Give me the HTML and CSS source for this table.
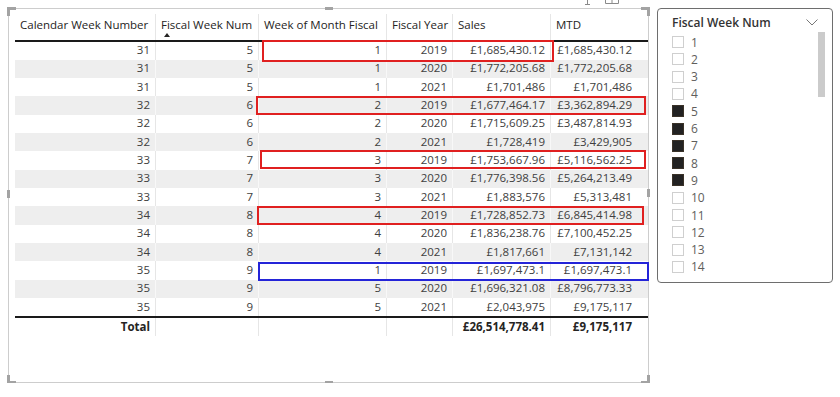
FILE: index.html
```html
<!DOCTYPE html>
<html lang="en">
  <head>
    <meta charset="UTF-8" />
    <meta name="viewport" content="width=device-width, initial-scale=1.0" />
    <title>Fiscal Week Report</title>
    <link rel="stylesheet" href="styles.css">
  </head>
  <body>
    <div class="page">
      <div class="visual">
        <svg class="visual-icons" width="40" height="8" viewBox="0 0 40 8">
          <path d="M3.5 0 V4 M1 4.5 H6" stroke="#8a8a8a" fill="none" />
          <path d="M21.5 0 V3.5 H34.5 V0 M28 0 V3.5" stroke="#8a8a8a" fill="none" />
        </svg>

        <div class="table">
          <div class="row head">
            <div class="cell">Calendar Week Number</div>
            <div class="cell sorted">Fiscal Week Num</div>
            <div class="cell">Week of Month Fiscal</div>
            <div class="cell">Fiscal Year</div>
            <div class="cell">Sales</div>
            <div class="cell">MTD</div>
          </div>
          <div class="rows">
            <div class="row"><div class="cell">31</div><div class="cell">5</div><div class="cell">1</div><div class="cell">2019</div><div class="cell">£1,685,430.12</div><div class="cell">£1,685,430.12</div></div>
            <div class="row"><div class="cell">31</div><div class="cell">5</div><div class="cell">1</div><div class="cell">2020</div><div class="cell">£1,772,205.68</div><div class="cell">£1,772,205.68</div></div>
            <div class="row"><div class="cell">31</div><div class="cell">5</div><div class="cell">1</div><div class="cell">2021</div><div class="cell">£1,701,486</div><div class="cell">£1,701,486</div></div>
            <div class="row"><div class="cell">32</div><div class="cell">6</div><div class="cell">2</div><div class="cell">2019</div><div class="cell">£1,677,464.17</div><div class="cell">£3,362,894.29</div></div>
            <div class="row"><div class="cell">32</div><div class="cell">6</div><div class="cell">2</div><div class="cell">2020</div><div class="cell">£1,715,609.25</div><div class="cell">£3,487,814.93</div></div>
            <div class="row"><div class="cell">32</div><div class="cell">6</div><div class="cell">2</div><div class="cell">2021</div><div class="cell">£1,728,419</div><div class="cell">£3,429,905</div></div>
            <div class="row"><div class="cell">33</div><div class="cell">7</div><div class="cell">3</div><div class="cell">2019</div><div class="cell">£1,753,667.96</div><div class="cell">£5,116,562.25</div></div>
            <div class="row"><div class="cell">33</div><div class="cell">7</div><div class="cell">3</div><div class="cell">2020</div><div class="cell">£1,776,398.56</div><div class="cell">£5,264,213.49</div></div>
            <div class="row"><div class="cell">33</div><div class="cell">7</div><div class="cell">3</div><div class="cell">2021</div><div class="cell">£1,883,576</div><div class="cell">£5,313,481</div></div>
            <div class="row"><div class="cell">34</div><div class="cell">8</div><div class="cell">4</div><div class="cell">2019</div><div class="cell">£1,728,852.73</div><div class="cell">£6,845,414.98</div></div>
            <div class="row"><div class="cell">34</div><div class="cell">8</div><div class="cell">4</div><div class="cell">2020</div><div class="cell">£1,836,238.76</div><div class="cell">£7,100,452.25</div></div>
            <div class="row"><div class="cell">34</div><div class="cell">8</div><div class="cell">4</div><div class="cell">2021</div><div class="cell">£1,817,661</div><div class="cell">£7,131,142</div></div>
            <div class="row"><div class="cell">35</div><div class="cell">9</div><div class="cell">1</div><div class="cell">2019</div><div class="cell">£1,697,473.1</div><div class="cell">£1,697,473.1</div></div>
            <div class="row"><div class="cell">35</div><div class="cell">9</div><div class="cell">5</div><div class="cell">2020</div><div class="cell">£1,696,321.08</div><div class="cell">£8,796,773.33</div></div>
            <div class="row"><div class="cell">35</div><div class="cell">9</div><div class="cell">5</div><div class="cell">2021</div><div class="cell">£2,043,975</div><div class="cell">£9,175,117</div></div>
          </div>
          <div class="row total">
            <div class="cell">Total</div><div class="cell"></div><div class="cell"></div><div class="cell"></div><div class="cell">£26,514,778.41</div><div class="cell">£9,175,117</div>
          </div>
        </div>

        <!-- highlight boxes drawn over the table -->
        <div class="mark red m1"></div>
        <div class="mark red m2"></div>
        <div class="mark red m3"></div>
        <div class="mark red m4"></div>
        <div class="mark blue m5"></div>

        <!-- selection frame corners and handles -->
        <span class="corner tl"></span>
        <span class="corner tr"></span>
        <span class="corner bl"></span>
        <span class="corner br"></span>
        <span class="handle top"></span>
        <span class="handle bottom"></span>
        <span class="handle left"></span>
        <span class="handle right"></span>
      </div>

      <div class="slicer">
        <div class="slicer-head">
          <span class="slicer-title">Fiscal Week Num</span>
          <svg class="chevron" width="12" height="7" viewBox="0 0 12 7">
            <path d="M0.5 0.5 L6 6 L11.5 0.5" stroke="#777" fill="none" />
          </svg>
        </div>
        <ul class="slicer-list">
          <li><span class="box"></span>1</li>
          <li><span class="box"></span>2</li>
          <li><span class="box"></span>3</li>
          <li><span class="box"></span>4</li>
          <li><span class="box checked"></span>5</li>
          <li><span class="box checked"></span>6</li>
          <li><span class="box checked"></span>7</li>
          <li><span class="box checked"></span>8</li>
          <li><span class="box checked"></span>9</li>
          <li><span class="box"></span>10</li>
          <li><span class="box"></span>11</li>
          <li><span class="box"></span>12</li>
          <li><span class="box"></span>13</li>
          <li><span class="box"></span>14</li>
        </ul>
        <div class="scrollbar"></div>
      </div>
    </div>
  </body>
</html>
```

FILE: styles.css
```css
body {
  margin: 0;
  font-family: "Open Sans", "Segoe UI", sans-serif;
  background-color: #ffffff;
}

.page {
  display: flex;
  align-items: flex-start;
  gap: 8px;
  padding: 8px 0 0 8px;
}

.visual {
  position: relative;
  width: 641px;
  height: 375px;
  box-sizing: border-box;
  border: 1px solid #cdcdcd;
  padding: 5px 0 0 6px;
}
.visual-icons {
  position: absolute;
  top: -9px;
  left: 575px;
}

/* table */
.row {
  display: grid;
  grid-template-columns: 141px 103px 128px 66px 98px 86px;
  height: 18.33px;
}
.cell {
  display: flex;
  align-items: center;
  justify-content: flex-end;
  box-sizing: border-box;
  padding: 0 5px 2px;
  border-right: 1px solid #e6e6e6;
  font-size: 11.5px;
  color: #404040;
  white-space: nowrap;
  overflow: hidden;
}
.cell:last-child {
  border-right: none;
}
.rows .row:nth-child(even) {
  background-color: #eeeeee;
}
.rows .row:nth-child(even) .cell {
  border-right-color: #f8f8f8;
}
.rows .row:nth-child(even) .cell:last-child {
  border-right: none;
}

.head {
  height: 27.5px;
  box-sizing: border-box;
  border-bottom: 2px solid #1a1a1a;
}
.head .cell {
  justify-content: flex-start;
  padding-bottom: 4px;
  color: #252423;
  overflow: visible;
}
.sorted {
  position: relative;
}
.sorted::after {
  content: "";
  position: absolute;
  left: 8px;
  top: 19px;
  border-left: 3px solid transparent;
  border-right: 3px solid transparent;
  border-bottom: 4px solid #252423;
}

.total {
  height: 19.5px;
  box-sizing: border-box;
  border-top: 2px solid #1a1a1a;
}
.total .cell {
  font-weight: 700;
  color: #252423;
}

/* highlight boxes */
.mark {
  position: absolute;
  box-sizing: border-box;
  border: 2px solid #e02020;
}
.blue {
  border-color: #2424d8;
}
.m1 { left: 253px; top: 31px; width: 292px; height: 22px; }
.m2 { left: 247px; top: 87px; width: 390px; height: 19px; }
.m3 { left: 251px; top: 141px; width: 386px; height: 19px; }
.m4 { left: 248px; top: 197px; width: 387px; height: 19px; }
.m5 { left: 249px; top: 253px; width: 391px; height: 19px; }

/* frame corners + handles */
.corner {
  position: absolute;
  width: 6px;
  height: 6px;
  border: 0 solid #a3a3a3;
}
.tl { left: -2px; top: -2px; border-top-width: 3px; border-left-width: 3px; }
.tr { right: -2px; top: -2px; border-top-width: 3px; border-right-width: 3px; }
.bl { left: -2px; bottom: -2px; border-bottom-width: 3px; border-left-width: 3px; }
.br { right: -2px; bottom: -2px; border-bottom-width: 3px; border-right-width: 3px; }
.handle {
  position: absolute;
  background-color: #a3a3a3;
}
.handle.top { left: 316px; top: -2px; width: 8px; height: 3px; }
.handle.bottom { left: 316px; bottom: -2px; width: 8px; height: 3px; }
.handle.left { left: -2px; top: 181px; width: 3px; height: 8px; }
.handle.right { right: -2px; top: 180px; width: 3px; height: 8px; }

/* slicer */
.slicer {
  position: relative;
  width: 176px;
  height: 275px;
  box-sizing: border-box;
  border: 1px solid #6e6e6e;
  border-radius: 4px;
  padding: 4px 14px 0 14px;
}
.slicer-head {
  display: flex;
  justify-content: space-between;
  align-items: center;
  height: 18px;
}
.slicer-title {
  font-size: 12px;
  font-weight: 600;
  color: #333333;
}
.chevron {
  margin-top: 1px;
}
.slicer-list {
  list-style-type: none;
  margin: 2.4px 0 0;
  padding: 0;
}
.slicer-list li {
  display: flex;
  align-items: center;
  gap: 7px;
  height: 17.3px;
  font-size: 12px;
  color: #605e5c;
}
.box {
  width: 12px;
  height: 12px;
  box-sizing: border-box;
  border: 1px solid #cfcfcf;
  background-color: #ffffff;
}
.box.checked {
  background-color: #222222;
  border-color: #3a3228;
}
.scrollbar {
  position: absolute;
  left: 160px;
  top: 23px;
  width: 7px;
  height: 65px;
  background-color: #cbcbcb;
}
```
